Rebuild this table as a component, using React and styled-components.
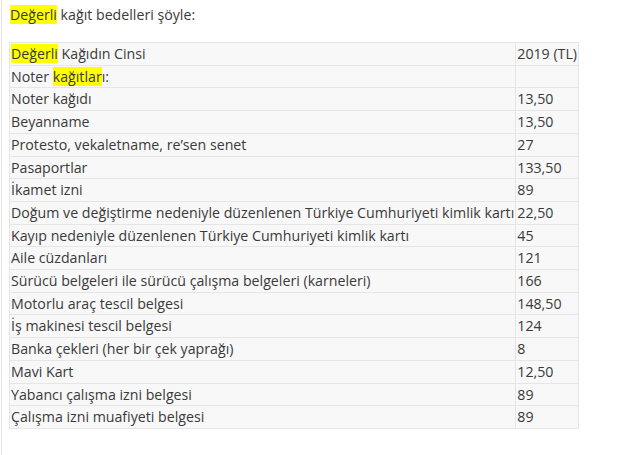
import styled, { createGlobalStyle } from 'styled-components';

const GlobalStyle = createGlobalStyle`
  html, body {
    margin: 0;
    background: #fff;
  }
  body {
    font-family: "Open Sans", "Noto Sans", sans-serif;
    color: #3a3a3a;
  }
`;

const Page = styled.div`
  min-height: 455px;
  border-left: 1px solid #e4e4e4;
  margin-left: 1px;
  padding: 4px 0 0 7px;
  box-sizing: border-box;
`;

const Lead = styled.p`
  margin: 0 0 16px 1px;
  font-size: 14.2px;
  line-height: 22px;
`;

const Mark = styled.span`
  background: #ffff00;
`;

const Table = styled.table`
  border-collapse: collapse;
  font-size: 14.2px;
`;

const Cell = styled.td`
  background: #f8f8f8;
  border: 1px solid #e6e6e6;
  padding: 0 1px;
  height: 21.7px;
  line-height: 21.7px;
  white-space: nowrap;
  vertical-align: middle;
  min-width: ${p => (p.$wide ? '0' : '60px')};
`;

const rows = [
  ['Noter kağıdı', '13,50'],
  ['Beyanname', '13,50'],
  ['Protesto, vekaletname, re’sen senet', '27'],
  ['Pasaportlar', '133,50'],
  ['İkamet izni', '89'],
  ['Doğum ve değiştirme nedeniyle düzenlenen Türkiye Cumhuriyeti kimlik kartı', '22,50'],
  ['Kayıp nedeniyle düzenlenen Türkiye Cumhuriyeti kimlik kartı', '45'],
  ['Aile cüzdanları', '121'],
  ['Sürücü belgeleri ile sürücü çalışma belgeleri (karneleri)', '166'],
  ['Motorlu araç tescil belgesi', '148,50'],
  ['İş makinesi tescil belgesi', '124'],
  ['Banka çekleri (her bir çek yaprağı)', '8'],
  ['Mavi Kart', '12,50'],
  ['Yabancı çalışma izni belgesi', '89'],
  ['Çalışma izni muafiyeti belgesi', '89'],
];

export default function App() {
  return (
    <>
      <GlobalStyle />
      <Page>
        <Lead>
          <Mark>Değerli</Mark> kağıt bedelleri şöyle:
        </Lead>
        <Table>
          <tbody>
            <tr>
              <Cell $wide><Mark>Değerli</Mark> Kağıdın Cinsi</Cell>
              <Cell>2019 (TL)</Cell>
            </tr>
            <tr>
              <Cell $wide>Noter <Mark>kağıtlar</Mark>ı:</Cell>
              <Cell></Cell>
            </tr>
            {rows.map(([name, price]) => (
              <tr key={name}>
                <Cell $wide>{name}</Cell>
                <Cell>{price}</Cell>
              </tr>
            ))}
          </tbody>
        </Table>
      </Page>
    </>
  );
}
